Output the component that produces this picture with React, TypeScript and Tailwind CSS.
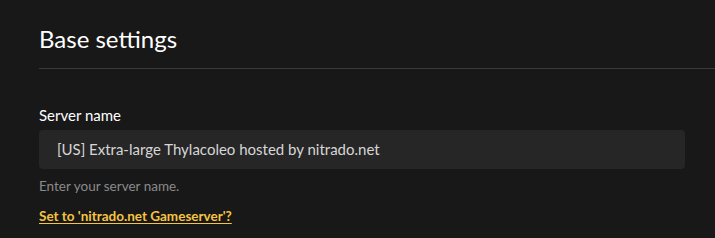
export default function App() {
  return (
    <div
      className="min-h-[238px] w-full bg-[#181818] pl-[39px] pt-[20px]"
      style={{ fontFamily: "Lato, 'Noto Sans', sans-serif" }}
    >
      <h1 className="text-[24px] leading-[37px] text-white">Base settings</h1>
      <div className="mt-[11px] h-px bg-[#3a3a3a]" />

      <div className="mr-[30px] mt-[36px]">
        <label className="block text-[15px] leading-[20px] text-white">Server name</label>
        <div className="mt-[5px] flex h-[39px] items-center rounded-[4px] bg-[#262626] pl-[18px] pr-4 text-[15px] text-[#d6d6d6]">
          <span>[US] Extra-large Thylacoleo hosted by nitrado.net</span>
        </div>
        <p className="mt-[8px] text-[13.5px] leading-[18px] text-[#8a8a8a]">Enter your server name.</p>
        <a
          href="#"
          className="mt-[12px] inline-block text-[13.5px] font-bold leading-[18px] text-[#f6c443] underline underline-offset-2"
        >
          Set to 'nitrado.net Gameserver'?
        </a>
      </div>
    </div>
  );
}
